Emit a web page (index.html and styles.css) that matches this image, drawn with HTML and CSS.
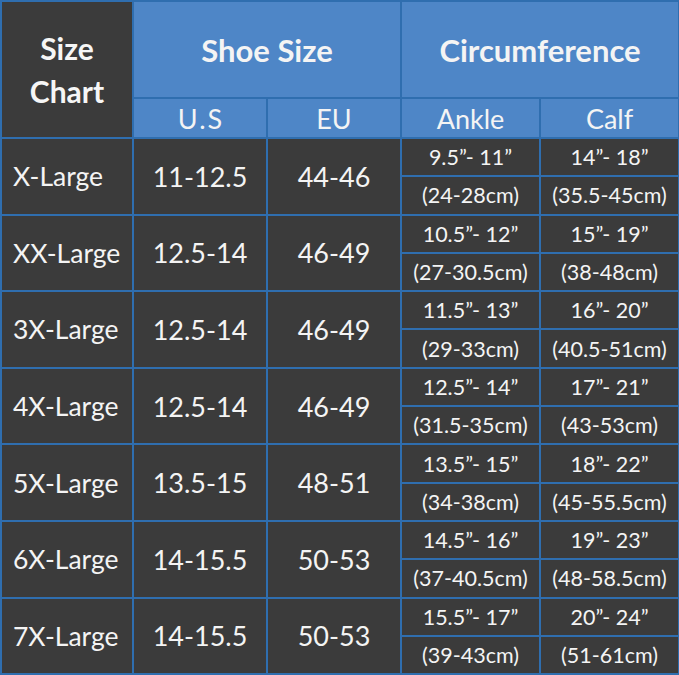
FILE: index.html
```html
<!DOCTYPE html>
<html>
<head>
<meta charset="utf-8">
<link rel="stylesheet" href="styles.css">
</head>
<body>
<table class="chart">
  <colgroup>
    <col class="c-size"><col class="c-us"><col class="c-eu"><col class="c-ankle"><col class="c-calf">
  </colgroup>
  <thead>
    <tr class="h1">
      <th rowspan="2" class="corner">Size<br>Chart</th>
      <th colspan="2" class="group">Shoe Size</th>
      <th colspan="2" class="group">Circumference</th>
    </tr>
    <tr class="h2">
      <th class="sub sub-us">U.S</th><th class="sub">EU</th><th class="sub">Ankle</th><th class="sub">Calf</th>
    </tr>
  </thead>
  <tbody>
    <tr><td rowspan="2" class="name">X-Large</td><td rowspan="2" class="num">11-12.5</td><td rowspan="2" class="num">44-46</td><td class="m">9.5”- 11”</td><td class="m">14”- 18”</td></tr>
    <tr><td class="m">(24-28cm)</td><td class="m">(35.5-45cm)</td></tr>
    <tr><td rowspan="2" class="name">XX-Large</td><td rowspan="2" class="num">12.5-14</td><td rowspan="2" class="num">46-49</td><td class="m">10.5”- 12”</td><td class="m">15”- 19”</td></tr>
    <tr><td class="m">(27-30.5cm)</td><td class="m">(38-48cm)</td></tr>
    <tr><td rowspan="2" class="name">3X-Large</td><td rowspan="2" class="num">12.5-14</td><td rowspan="2" class="num">46-49</td><td class="m">11.5”- 13”</td><td class="m">16”- 20”</td></tr>
    <tr><td class="m">(29-33cm)</td><td class="m">(40.5-51cm)</td></tr>
    <tr><td rowspan="2" class="name">4X-Large</td><td rowspan="2" class="num">12.5-14</td><td rowspan="2" class="num">46-49</td><td class="m">12.5”- 14”</td><td class="m">17”- 21”</td></tr>
    <tr><td class="m">(31.5-35cm)</td><td class="m">(43-53cm)</td></tr>
    <tr><td rowspan="2" class="name">5X-Large</td><td rowspan="2" class="num">13.5-15</td><td rowspan="2" class="num">48-51</td><td class="m">13.5”- 15”</td><td class="m">18”- 22”</td></tr>
    <tr><td class="m">(34-38cm)</td><td class="m">(45-55.5cm)</td></tr>
    <tr><td rowspan="2" class="name">6X-Large</td><td rowspan="2" class="num">14-15.5</td><td rowspan="2" class="num">50-53</td><td class="m">14.5”- 16”</td><td class="m">19”- 23”</td></tr>
    <tr><td class="m">(37-40.5cm)</td><td class="m">(48-58.5cm)</td></tr>
    <tr><td rowspan="2" class="name">7X-Large</td><td rowspan="2" class="num">14-15.5</td><td rowspan="2" class="num">50-53</td><td class="m">15.5”- 17”</td><td class="m">20”- 24”</td></tr>
    <tr><td class="m">(39-43cm)</td><td class="m">(51-61cm)</td></tr>
  </tbody>
</table>
</body>
</html>
```
FILE: styles.css
```css
html, body {
  margin: 0;
  padding: 0;
  background: #ffffff;
}
.chart {
  border-collapse: collapse;
  table-layout: fixed;
  width: 678px;
  font-family: Lato, "Open Sans", sans-serif;
  color: #f4f4f4;
}
.c-size { width: 132px; }
.c-us { width: 134px; }
.c-eu { width: 134px; }
.c-ankle { width: 139px; }
.c-calf { width: 139px; }
.chart th, .chart td {
  border: 2px solid #2f6eaf;
  padding: 0;
  text-align: center;
  vertical-align: middle;
  white-space: nowrap;
}
.h1 { height: 97px; }
.h2 { height: 40px; }
.corner {
  background: #3b3b3b;
  font-size: 30px;
  font-weight: 700;
  line-height: 43px;
  color: #f6f6f6;
}
.group {
  background: #4e86c7;
  font-size: 31px;
  font-weight: 700;
}
.sub {
  background: #4e86c7;
  font-size: 27px;
  font-weight: 400;
}
.chart .sub-us {
  letter-spacing: 2px;
  text-indent: 2px;
}
.chart tbody tr { height: 38.3px; }
.chart tbody td {
  background: #3b3b3b;
}
.name {
  text-align: left !important;
  padding-left: 11px !important;
  font-size: 26.5px;
}
.num {
  font-size: 27px;
}
.m {
  font-size: 21.5px;
}
```
